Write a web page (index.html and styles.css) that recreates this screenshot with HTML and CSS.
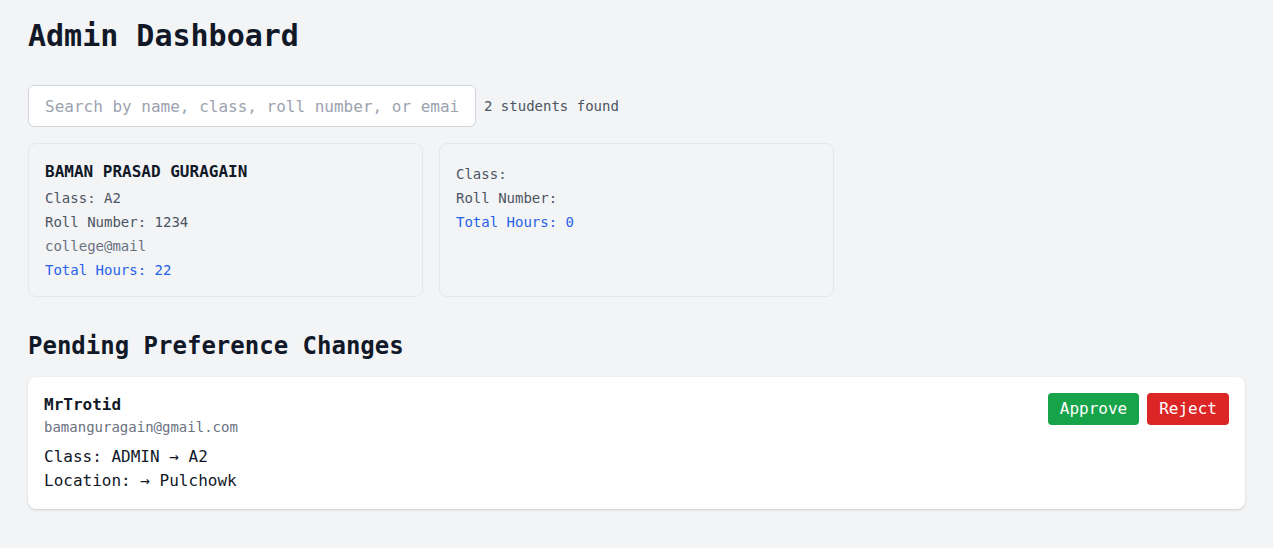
FILE: index.html
```html
<!DOCTYPE html>
<html lang="en">
<head>
<meta charset="utf-8">
<title>Admin Dashboard</title>
<link rel="stylesheet" href="styles.css">
</head>
<body>
<main class="page">
  <h1 class="title">Admin Dashboard</h1>

  <div class="search-row">
    <input class="search" type="text" placeholder="Search by name, class, roll number, or email">
    <span class="count">2 students found</span>
  </div>

  <div class="student-grid">
    <div class="student-card">
      <h3 class="student-name">BAMAN PRASAD GURAGAIN</h3>
      <p class="info">Class: A2</p>
      <p class="info">Roll Number: 1234</p>
      <p class="info email">college@mail</p>
      <p class="info hours">Total Hours: 22</p>
    </div>
    <div class="student-card">
      <h3 class="student-name"></h3>
      <p class="info">Class: </p>
      <p class="info">Roll Number: </p>
      <p class="info hours">Total Hours: 0</p>
    </div>
  </div>

  <h2 class="section-title">Pending Preference Changes</h2>

  <div class="pending-card">
    <div class="pending-info">
      <div class="pending-name">MrTrotid</div>
      <div class="pending-email">bamanguragain@gmail.com</div>
      <div class="changes">
        <div>Class: ADMIN → A2</div>
        <div>Location: → Pulchowk</div>
      </div>
    </div>
    <div class="actions">
      <button class="btn approve">Approve</button>
      <button class="btn reject">Reject</button>
    </div>
  </div>
</main>
</body>
</html>
```

FILE: styles.css
```css
* { box-sizing: border-box; }

html, body {
  margin: 0;
  padding: 0;
  background: #f3f4f6;
}

body {
  font-family: "DejaVu Sans Mono", "Liberation Mono", monospace;
  color: #111827;
}

.page {
  padding: 17px 28px 28px;
}

.title {
  margin: 0 0 32px;
  padding-top: 1px;
  height: 36px;
  font-size: 30px;
  line-height: 36px;
  font-weight: 700;
}

.search-row {
  display: flex;
  align-items: center;
  gap: 8px;
  margin-bottom: 16px;
}

.search {
  width: 448px;
  height: 42px;
  padding: 8px 16px;
  border: 1px solid #d1d5db;
  border-radius: 6px;
  background: #ffffff;
  font-family: inherit;
  font-size: 16px;
  line-height: 24px;
  color: #111827;
  outline: none;
}

.search::placeholder {
  color: #9ca3af;
}

.count {
  font-size: 14px;
  line-height: 20px;
  color: #4b5563;
}

.student-grid {
  display: grid;
  grid-template-columns: repeat(3, 1fr);
  gap: 16px;
}

.student-card {
  border: 1px solid #e5e7eb;
  border-radius: 8px;
  padding: 16px;
  background: #f3f4f6;
}

.student-name {
  margin: 0;
  font-size: 16px;
  line-height: 24px;
  font-weight: 700;
  color: #111827;
}

.student-name:empty {
  line-height: 0;
  height: 0;
}

.info {
  margin: 4px 0 0;
  font-size: 14px;
  line-height: 20px;
  color: #4b5563;
}

.info.email {
  color: #6b7280;
}

.info.hours {
  color: #2563eb;
}

.section-title {
  margin: 32px 0 16px;
  padding-top: 1px;
  height: 32px;
  font-size: 24px;
  line-height: 32px;
  font-weight: 700;
}

.pending-card {
  display: flex;
  justify-content: space-between;
  align-items: flex-start;
  background: #ffffff;
  border-radius: 8px;
  padding: 16px;
  box-shadow: 0 1px 3px rgba(0, 0, 0, 0.1), 0 1px 2px rgba(0, 0, 0, 0.06);
}

.pending-name {
  font-size: 16px;
  line-height: 24px;
  font-weight: 700;
}

.pending-email {
  font-size: 14px;
  line-height: 20px;
  color: #6b7280;
}

.changes {
  margin-top: 8px;
  font-size: 16px;
  line-height: 24px;
  color: #111827;
}

.actions {
  display: flex;
  gap: 8px;
}

.btn {
  border: none;
  border-radius: 4px;
  padding: 4px 12px;
  font-family: inherit;
  font-size: 16px;
  line-height: 24px;
  color: #ffffff;
  cursor: pointer;
}

.btn.approve { background: #16a34a; }
.btn.reject { background: #dc2626; }
```
